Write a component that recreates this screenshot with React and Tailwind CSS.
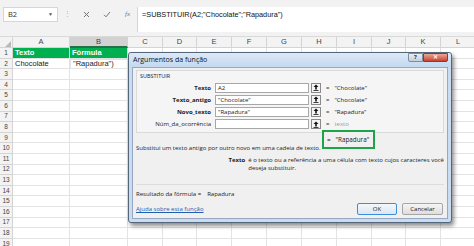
import { useState } from "react";

const cols = [
  { name: "A", w: "w-[57px]" },
  { name: "B", w: "w-[58px]" },
  { name: "C", w: "w-[35px]" },
  { name: "D", w: "w-[34px]" },
  { name: "E", w: "w-[35px]" },
  { name: "F", w: "w-[35px]" },
  { name: "G", w: "w-[35px]" },
  { name: "H", w: "w-[35px]" },
  { name: "I", w: "w-[35px]" },
  { name: "J", w: "w-[34px]" },
  { name: "K", w: "w-[35px]" },
  { name: "L", w: "w-[35px]" },
];

const rows = Array.from({ length: 19 }, (_, i) => i + 1);

const args = [
  { label: "Texto", bold: true, value: "A2", result: '"Chocolate"' },
  { label: "Texto_antigo", bold: true, value: '"Chocolate"', result: '"Chocolate"' },
  { label: "Novo_texto", bold: true, value: '"Rapadura"', result: '"Rapadura"' },
  { label: "Núm_da_ocorrência", bold: false, value: "", result: "texto", muted: true },
];

function RefButton() {
  return (
    <div className="w-[10px] h-[10px] border border-[#8a8a8a] bg-[#f4f4f4] flex items-center justify-center ml-[2px]">
      <svg width="6" height="7" viewBox="0 0 6 7">
        <path d="M3 0.5 L5.5 3 L3.8 3 L3.8 5.5 L2.2 5.5 L2.2 3 L0.5 3 Z" fill="#111" />
        <rect x="0.5" y="6" width="5" height="0.8" fill="#111" />
      </svg>
    </div>
  );
}

function Cell({ w, children, className = "" }) {
  return (
    <div className={`${w} h-full shrink-0 border-r border-b border-[#e3e3e3] flex items-center px-[2px] overflow-hidden whitespace-nowrap ${className}`}>
      {children}
    </div>
  );
}

export default function App() {
  const [selected] = useState("B2");

  return (
    <div className="relative w-[474px] h-[246px] overflow-hidden bg-white text-[#222]" style={{ fontFamily: '"Open Sans", "Noto Sans", sans-serif' }}>
      {/* formula bar */}
      <div className="h-[37px] bg-[#f2f2f2] flex items-start pt-[7px] border-b border-[#d9d9d9]">
        <div className="ml-[3px] w-[55px] h-[15px] bg-white border border-[#d6d6d6] flex items-center justify-between px-[4px] text-[7.5px] text-[#333]">
          <span>{selected}</span>
          <span className="text-[5px] text-[#555]">▼</span>
        </div>
        <div className="w-[18px] h-[15px] flex items-center justify-center text-[#b0b0b0] text-[7px]">⋮</div>
        <div className="w-[61px] h-[15px] flex items-center justify-around text-[#666]">
          <svg width="7" height="7" viewBox="0 0 7 7"><path d="M1 1 L6 6 M6 1 L1 6" stroke="#666" strokeWidth="0.9" /></svg>
          <svg width="8" height="7" viewBox="0 0 8 7"><path d="M1 3.8 L3 5.8 L7 1" stroke="#666" strokeWidth="0.9" fill="none" /></svg>
          <span className="italic text-[7px] text-[#777]" style={{ fontFamily: '"Liberation Serif", serif' }}>fx</span>
        </div>
        <div className="flex-1 h-[25px] bg-white border-l border-[#d6d6d6] pl-[4px] pt-[3px] text-[7.3px] text-[#111]" style={{ fontFamily: '"Liberation Sans", sans-serif' }}>
          =SUBSTITUIR(A2;"Chocolate";"Rapadura")
        </div>
      </div>

      {/* sheet */}
      <div className="text-[7.5px]" style={{ fontFamily: '"Liberation Sans", sans-serif' }}>
        <div className="flex h-[11px] bg-[#f3f3f3]">
          <div className="w-[13px] h-full shrink-0 border-r border-b border-[#d4d4d4] flex items-end justify-end pr-[1px]">
            <svg width="6" height="6" viewBox="0 0 6 6"><path d="M6 0 L6 6 L0 6 Z" fill="#b9b9b9" /></svg>
          </div>
          {cols.map((c) => (
            <div
              key={c.name}
              className={`${c.w} h-full shrink-0 border-r border-[#d4d4d4] flex items-center justify-center text-[#444] ${c.name === "B" ? "bg-[#d2d2d2] border-b-2 border-b-[#217346]" : "border-b"}`}
            >
              {c.name}
            </div>
          ))}
        </div>
        {rows.map((r) => (
          <div key={r} className="flex h-[10.6px]">
            <div className="w-[13px] h-full shrink-0 bg-[#f3f3f3] border-r border-b border-[#d4d4d4] flex items-center justify-center text-[6.5px] text-[#444]">
              {r}
            </div>
            {cols.map((c) => {
              if (r === 1 && (c.name === "A" || c.name === "B")) {
                return (
                  <Cell key={c.name} w={c.w} className="bg-[#00b050] text-white font-bold border-[#00b050]">
                    {c.name === "A" ? "Texto" : "Fórmula"}
                  </Cell>
                );
              }
              if (r === 2 && c.name === "A") {
                return <Cell key={c.name} w={c.w}>Chocolate</Cell>;
              }
              if (r === 2 && c.name === "B") {
                return (
                  <Cell key={c.name} w={c.w} className="border border-[#217346]">
                    "Rapadura")
                  </Cell>
                );
              }
              return <Cell key={c.name} w={c.w} />;
            })}
          </div>
        ))}
      </div>

      {/* dialog */}
      <div
        className="absolute left-[128px] top-[52px] w-[324px] h-[171px] rounded-[3px] border border-[#55667a] bg-[#c9dcf1] shadow-[2px_3px_4px_rgba(0,0,0,0.45)] flex flex-col"
        style={{ fontFamily: '"Open Sans", "Noto Sans", sans-serif' }}
      >
        <div className="h-[14px] shrink-0 flex items-start justify-between bg-gradient-to-b from-[#dce9f8] to-[#c4d8ef] rounded-t-[3px]">
          <span className="pl-[4px] pt-[2px] text-[7px] text-[#111]">Argumentos da função</span>
          <div className="flex mr-[3px]">
            <div className="w-[15px] h-[9px] border border-[#7d8ea3] rounded-bl-[2px] bg-gradient-to-b from-[#e8eef6] to-[#c3cfdd] flex items-center justify-center text-[6px] text-[#333] font-bold">?</div>
            <div className="w-[25px] h-[9px] border border-[#8a3b30] rounded-br-[2px] bg-gradient-to-b from-[#e9a597] to-[#c7402b] flex items-center justify-center text-[6px] text-white font-bold">✕</div>
          </div>
        </div>
        <div className="relative flex-1 mx-[3px] mb-[3px] bg-[#f0f0f0] border border-[#97a9c0] flex flex-col px-[3px] pt-[2px] text-[6px] text-[#222] leading-[8px]">
          <div className="border border-[#dadada] bg-[#f5f5f5] px-[3px] pt-[1px] h-[63px] shrink-0">
            <div className="text-[5.5px]">SUBSTITUIR</div>
            <div className="flex flex-col gap-[2.2px] mt-[2.5px]">
              {args.map((a) => (
                <div key={a.label} className="flex items-center h-[10px]">
                  <div className={`w-[75px] text-right pr-[4px] ${a.bold ? "font-bold" : ""} whitespace-nowrap`}>
                    {a.label}
                  </div>
                  <div className="w-[94px] h-[10px] bg-white border border-[#a7a7a7] leading-[8px] px-[2px]">
                    {a.value}
                  </div>
                  <RefButton />
                  <span className="ml-[5px] text-[#333]">=</span>
                  <span className={`ml-[5px] ${a.muted ? "text-[#9a9a9a]" : ""}`}>{a.result}</span>
                </div>
              ))}
            </div>
          </div>
          {/* highlight annotation */}
          <div className="absolute left-[189px] top-[62px] w-[53px] h-[19px] border-2 border-[#1fa34a] flex items-center pl-[3px] bg-[#f0f0f0] text-[6.3px]">
            <span>=</span>
            <span className="ml-[5px]">"Rapadura"</span>
          </div>
          <div className="mt-[11px] whitespace-nowrap">Substitui um texto antigo por outro novo em uma cadeia de texto.</div>
          <div className="flex mt-[4px]">
            <div className="w-[113px] text-right pr-[3px] font-bold">Texto</div>
            <div className="whitespace-nowrap">
              é o texto ou a referência a uma célula com texto cujos caracteres você
              <br />
              deseja substituir.
            </div>
          </div>
          <div className="mt-[12px] border-t border-[#dcdcdc]" />
          <div className="mt-[5px]">
            Resultado da fórmula =<span className="ml-[6px]">Rapadura</span>
          </div>
          <div className="flex items-center justify-between mt-[5px]">
            <a className="text-[#1e5fb3] underline">Ajuda sobre esta função</a>
            <div className="flex gap-[5px] mr-[1px]">
              <div className="w-[40px] h-[12px] border border-[#3c8ed8] rounded-[2px] bg-gradient-to-b from-[#f4f8fc] to-[#dbe6f1] flex items-center justify-center">OK</div>
              <div className="w-[41px] h-[12px] border border-[#a6a6a6] rounded-[2px] bg-gradient-to-b from-[#f5f5f5] to-[#dedede] flex items-center justify-center">Cancelar</div>
            </div>
          </div>
        </div>
      </div>
    </div>
  );
}
